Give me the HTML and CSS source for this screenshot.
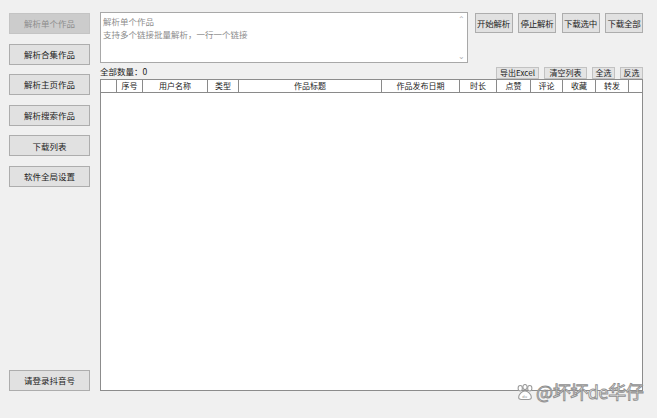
FILE: index.html
```html
<!DOCTYPE html>
<html lang="zh-CN">
<head>
<meta charset="utf-8">
<title>作品解析</title>
<link rel="stylesheet" href="styles.css">
</head>
<body>
<div class="app">
  <div class="side">
    <button class="btn side_btn" disabled>解析单个作品</button>
    <button class="btn side_btn">解析合集作品</button>
    <button class="btn side_btn">解析主页作品</button>
    <button class="btn side_btn">解析搜索作品</button>
    <button class="btn side_btn">下载列表</button>
    <button class="btn side_btn">软件全局设置</button>
    <button class="btn side_btn login">请登录抖音号</button>
  </div>

  <div class="main">
    <div class="top">
      <div class="input_box">
        <div class="input_text">
          <p>解析单个作品</p>
          <p>支持多个链接批量解析，一行一个链接</p>
        </div>
        <div class="scroll">
          <span class="arrow">&#8963;</span>
          <span class="arrow">&#8964;</span>
        </div>
      </div>
      <div class="actions">
        <button class="btn act_btn">开始解析</button>
        <button class="btn act_btn">停止解析</button>
        <button class="btn act_btn">下载选中</button>
        <button class="btn act_btn">下载全部</button>
      </div>
    </div>

    <div class="toolbar">
      <span class="count">全部数量：0</span>
      <div class="tools">
        <button class="btn tool_btn w_excel">导出Excel</button>
        <button class="btn tool_btn w_clear">清空列表</button>
        <button class="btn tool_btn w_sel">全选</button>
        <button class="btn tool_btn w_sel">反选</button>
      </div>
    </div>

    <div class="list">
      <div class="list_head">
        <span class="col c0"></span>
        <span class="col c1">序号</span>
        <span class="col c2">用户名称</span>
        <span class="col c3">类型</span>
        <span class="col c4">作品标题</span>
        <span class="col c5">作品发布日期</span>
        <span class="col c6">时长</span>
        <span class="col c7">点赞</span>
        <span class="col c8">评论</span>
        <span class="col c9">收藏</span>
        <span class="col c10">转发</span>
        <span class="col c11"></span>
      </div>
    </div>
  </div>
</div>

<div class="mark">
  <svg width="18" height="16" viewBox="0 0 17 15">
    <g fill="#fff" stroke="#9a9a9a" stroke-width="1">
      <ellipse cx="4" cy="4" rx="2" ry="2.6"/>
      <ellipse cx="8.5" cy="2.8" rx="2" ry="2.4"/>
      <ellipse cx="13" cy="4" rx="2" ry="2.6"/>
      <path d="M8.5 6.5c-3 0-6 3.5-6 6 0 1.5 1.2 2 2.5 2h7c1.3 0 2.5-.5 2.5-2 0-2.5-3-6-6-6z"/>
    </g>
    <text x="6" y="13" font-size="4" fill="#9a9a9a" font-family="Liberation Sans, sans-serif">du</text>
  </svg>
  <span>@坏坏de华仔</span>
</div>
</body>
</html>
```

FILE: styles.css
```css
html,body{margin:0;padding:0;}
body{width:657px;height:418px;background:#f0f0f0;font-family:"Noto Sans CJK SC","Microsoft YaHei",sans-serif;font-size:9px;color:#1a1a1a;position:relative;overflow:hidden;}
p{margin:0;}

.app{display:flex;padding:12px 0 0 9px;}

.btn{font-family:inherit;font-size:9px;color:#222;background:#e1e1e1;border:1px solid #adadad;padding:0;margin:0;line-height:1;white-space:nowrap;}

.side{width:81px;height:379px;display:flex;flex-direction:column;gap:9.6px;padding-top:1px;box-sizing:border-box;}
.side_btn{height:21px;width:81px;flex:none;font-size:8.5px;}
.side_btn:disabled{background:#cccccc;border-color:#c4c4c4;color:#8d8d8d;}
.login{margin-top:auto;}

.main{width:543px;margin-left:10px;}

.top{display:flex;}
.input_box{width:368px;height:51px;box-sizing:border-box;background:#fff;border:1px solid #a8a8a8;display:flex;}
.input_text{flex:1;padding:2px 2px;color:#8c8c8c;font-size:8.5px;line-height:12.5px;}
.scroll{width:10px;display:flex;flex-direction:column;justify-content:space-between;align-items:center;color:#b0b0b0;font-size:8px;line-height:8px;padding:2px 0;}

.actions{display:flex;gap:5.5px;margin-left:7px;margin-top:1px;}
.act_btn{width:38px;height:20px;font-size:8.5px;letter-spacing:-0.2px;}

.toolbar{display:flex;justify-content:space-between;align-items:flex-end;height:16px;}
.count{font-size:8.5px;line-height:10px;padding-bottom:3px;}
.tools{display:flex;gap:5px;}
.tool_btn{height:12px;font-size:8px;background:#e4e4e4;border-color:#c2c2c2;}
.w_excel{width:43px;}
.w_clear{width:43px;}
.w_sel{width:23px;}

.list{height:312px;box-sizing:border-box;background:#fff;border:1px solid #8c8c8c;}
.list_head{display:flex;height:13px;border-bottom:1px solid #8a8a8a;box-sizing:border-box;}
.col{box-sizing:border-box;border-right:1px solid #8a8a8a;text-align:center;font-size:8px;line-height:11px;color:#222;flex:none;}
.c0{width:16px;}
.c1{width:26px;}
.c2{width:65px;}
.c3{width:31px;}
.c4{width:143px;}
.c5{width:78px;}
.c6{width:37px;}
.c7{width:34px;}
.c8{width:32px;}
.c9{width:33px;}
.c10{width:33px;}
.c11{width:13px;border-right:none;}

.mark{position:absolute;left:516px;top:382px;display:flex;align-items:center;gap:2px;}
.mark span{font-family:"Noto Sans CJK SC",sans-serif;font-size:18px;color:#fff;-webkit-text-stroke:0.9px #8f8f8f;letter-spacing:-0.4px;line-height:19px;}
```
